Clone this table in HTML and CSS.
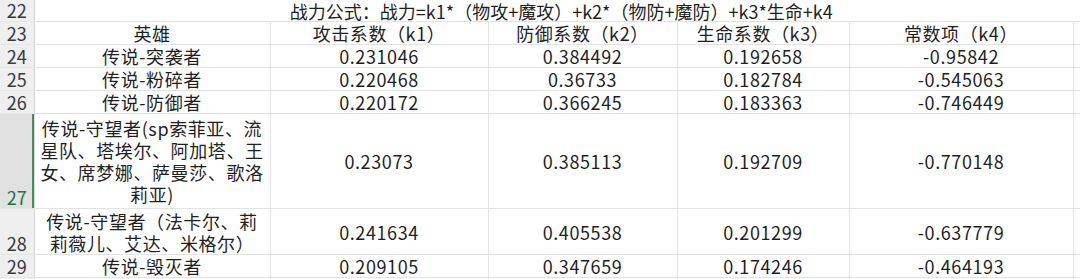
FILE: index.html
```html
<!DOCTYPE html>
<html lang="zh-CN">
<head>
    <meta charset="UTF-8">
    <title>战力公式</title>
    <link rel="stylesheet" href="styles.css">
</head>
<body>
    <table class="sheet">
        <colgroup>
            <col class="c-rn">
            <col class="c-a">
            <col class="c-b">
            <col class="c-c">
            <col class="c-d">
            <col class="c-e">
            <col class="c-f">
        </colgroup>
        <tr class="r-title">
            <td class="rn">22</td>
            <td class="title" colspan="6">战力公式：战力=k1*（物攻+魔攻）+k2*（物防+魔防）+k3*生命+k4</td>
        </tr>
        <tr class="r-std">
            <td class="rn">23</td>
            <td>英雄</td>
            <td>攻击系数（k1）</td>
            <td>防御系数（k2）</td>
            <td>生命系数（k3）</td>
            <td>常数项（k4）</td>
            <td></td>
        </tr>
        <tr class="r-std">
            <td class="rn">24</td>
            <td>传说-突袭者</td>
            <td>0.231046</td>
            <td>0.384492</td>
            <td>0.192658</td>
            <td>-0.95842</td>
            <td></td>
        </tr>
        <tr class="r-std">
            <td class="rn">25</td>
            <td>传说-粉碎者</td>
            <td>0.220468</td>
            <td>0.36733</td>
            <td>0.182784</td>
            <td>-0.545063</td>
            <td></td>
        </tr>
        <tr class="r-std">
            <td class="rn">26</td>
            <td>传说-防御者</td>
            <td>0.220172</td>
            <td>0.366245</td>
            <td>0.183363</td>
            <td>-0.746449</td>
            <td></td>
        </tr>
        <tr class="r-four sel">
            <td class="rn">27</td>
            <td class="wrap">传说-守望者(sp索菲亚、流<br>星队、塔埃尔、阿加塔、王<br>女、席梦娜、萨曼莎、歌洛<br>莉亚)</td>
            <td>0.23073</td>
            <td>0.385113</td>
            <td>0.192709</td>
            <td>-0.770148</td>
            <td></td>
        </tr>
        <tr class="r-two">
            <td class="rn">28</td>
            <td class="wrap">传说-守望者（法卡尔、莉<br>莉薇儿、艾达、米格尔）</td>
            <td>0.241634</td>
            <td>0.405538</td>
            <td>0.201299</td>
            <td>-0.637779</td>
            <td></td>
        </tr>
        <tr class="r-std">
            <td class="rn">29</td>
            <td>传说-毁灭者</td>
            <td>0.209105</td>
            <td>0.347659</td>
            <td>0.174246</td>
            <td>-0.464193</td>
            <td></td>
        </tr>
        <tr class="r-std">
            <td class="rn">30</td>
            <td></td>
            <td></td>
            <td></td>
            <td></td>
            <td></td>
            <td></td>
        </tr>
    </table>
</body>
</html>
```

FILE: styles.css
```css
body, html {
    margin: 0;
    padding: 0;
    background: #fff;
    overflow: hidden;
}
body {
    font-family: "Noto Sans CJK SC", "Noto Sans", sans-serif;
    font-size: 18px;
    color: #1f1f1f;
}
.sheet {
    border-collapse: collapse;
    table-layout: fixed;
    width: 1088px;
}
.c-rn { width: 34px; }
.c-a { width: 236px; }
.c-b { width: 218px; }
.c-c { width: 189px; }
.c-d { width: 172px; }
.c-e { width: 224px; }
.c-f { width: 15px; }
td {
    border: 1px solid #e3e3e3;
    padding: 0;
    text-align: center;
    vertical-align: middle;
    line-height: 22px;
    letter-spacing: 0.6px;
    white-space: nowrap;
    overflow: hidden;
}
.sheet tr:first-child td {
    border-top: none;
}
.r-title td { height: 19px; line-height: 20px; }
.r-std td { height: 22px; }
.r-four td { height: 94px; }
.r-two td { height: 45px; }
td.rn {
    background: #efefef;
    color: #3a3a3a;
    vertical-align: bottom;
    letter-spacing: 0;
    border-left: none;
    border-right-color: #d6d6d6;
    border-top-color: #e6e6e6;
    border-bottom-color: #e6e6e6;
    line-height: 21px;
}
.sel td.rn {
    background: #e1e1e1;
    color: #217346;
    box-shadow: inset -2px 0 0 #4a8a5e;
}
td.title {
    border-left: none;
    border-right: none;
    letter-spacing: 0;
    text-align: center;
    vertical-align: bottom;
}
td.wrap {
    white-space: normal;
}
```
